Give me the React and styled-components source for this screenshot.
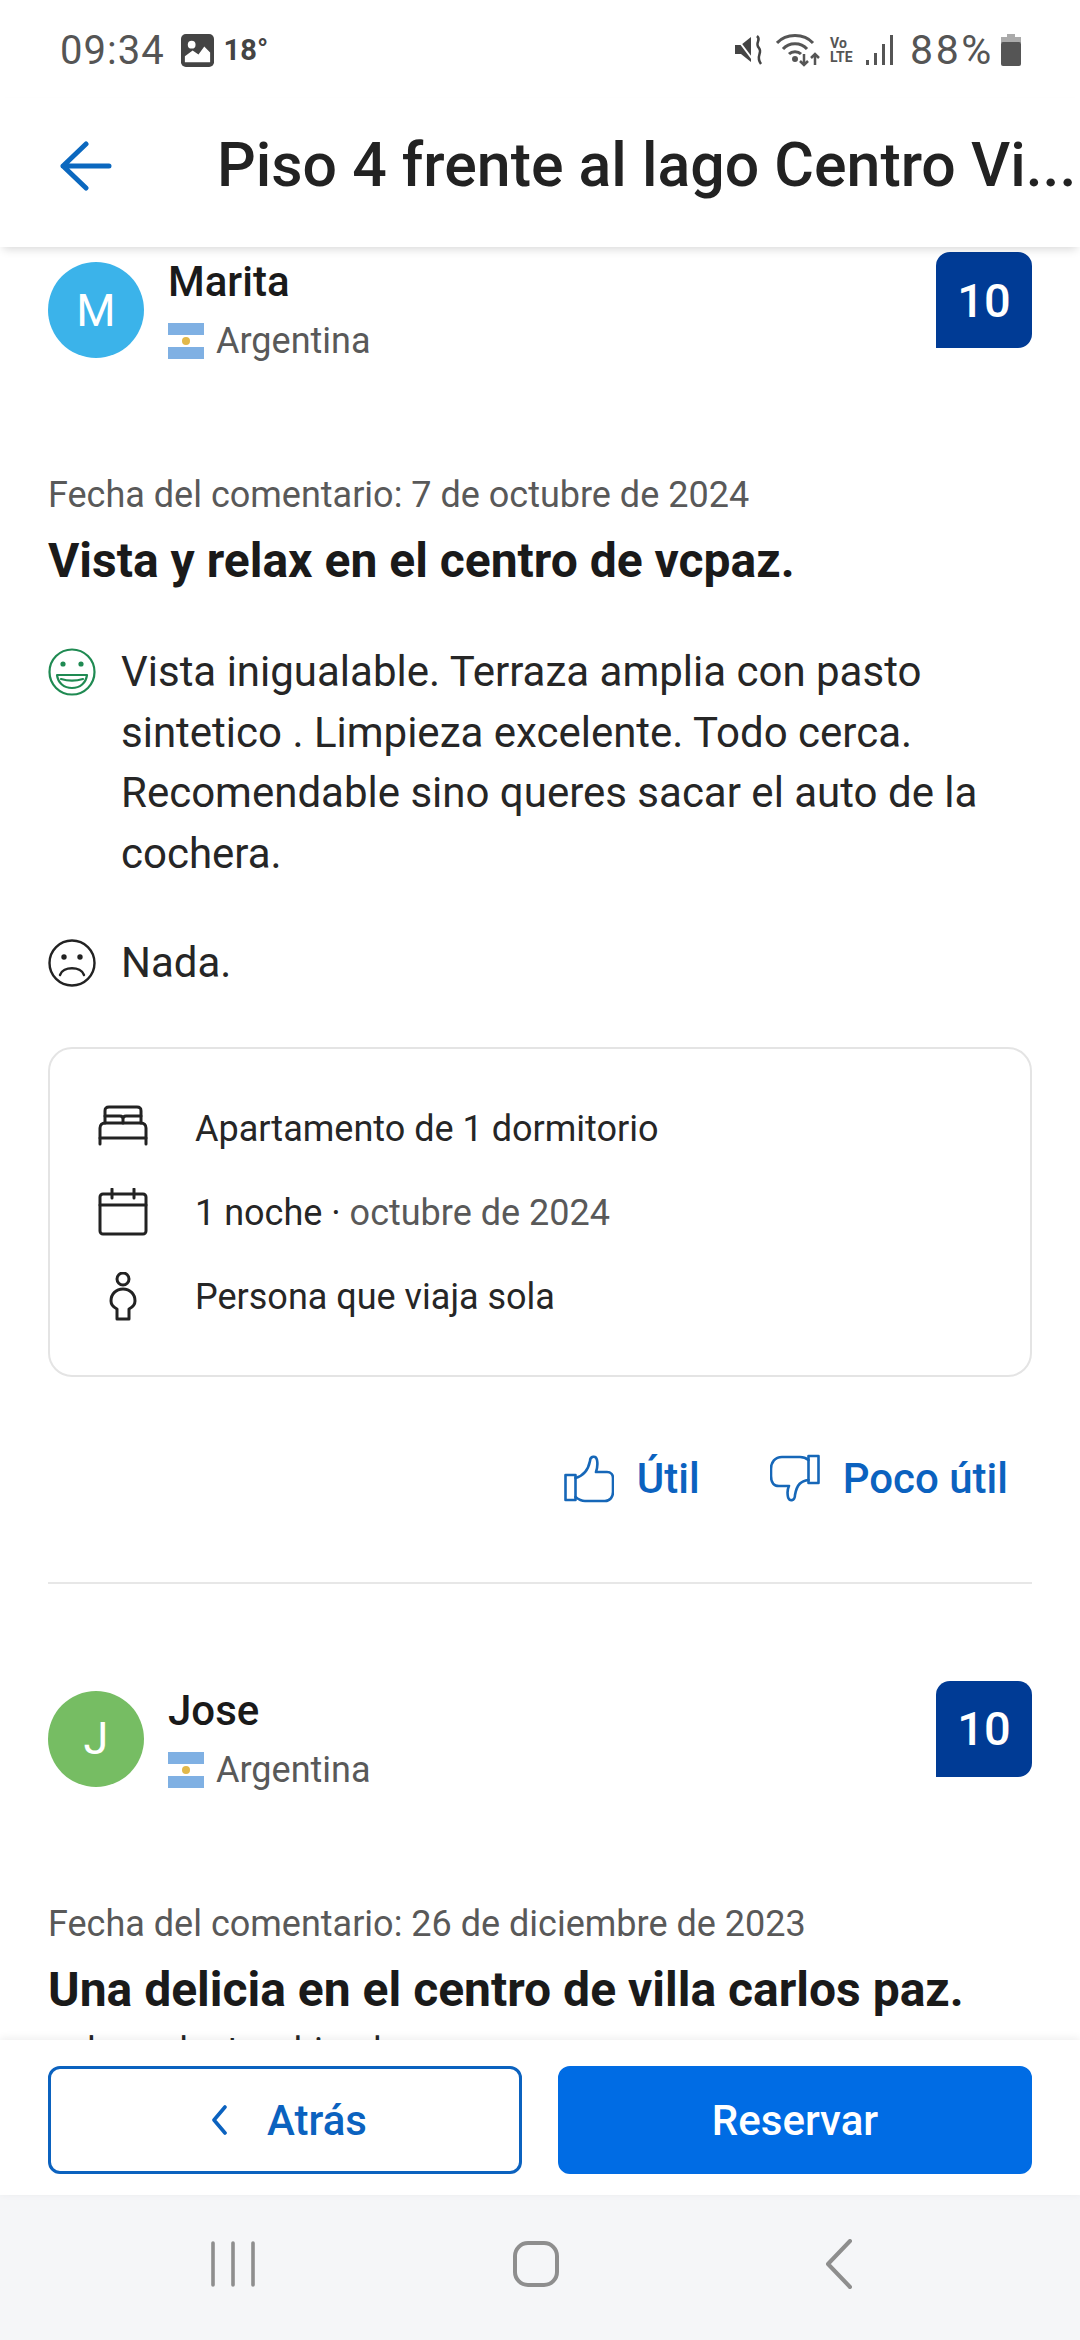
import React from "react";
import styled, { createGlobalStyle } from "styled-components";

const GlobalStyle = createGlobalStyle`
  html, body {
    margin: 0;
    padding: 0;
    background: #fff;
  }
  body {
    font-family: Roboto, "Liberation Sans", sans-serif;
    color: #1a1a1a;
  }
`;

const Screen = styled.div`
  width: 1080px;
  height: 2340px;
  display: flex;
  flex-direction: column;
  overflow: hidden;
  background: #fff;
`;

const StatusBar = styled.div`
  height: 98px;
  padding: 2px 58px 0 60px;
  box-sizing: border-box;
  display: flex;
  align-items: center;
  justify-content: space-between;
  color: #555;
  flex-shrink: 0;
`;

const StatusSide = styled.div`
  display: flex;
  align-items: center;
  gap: ${(p) => p.$gap || 10}px;
`;

const Clock = styled.span`
  font-size: 40px;
  letter-spacing: 1px;
  margin-right: 6px;
`;

const Temp = styled.span`
  font-size: 29px;
  font-weight: 700;
  color: #444;
`;

const Battery = styled.span`
  font-size: 41px;
  letter-spacing: 2.6px;
  margin-left: 6px;
`;

const Header = styled.header`
  height: 149px;
  flex-shrink: 0;
  display: flex;
  align-items: center;
  background: #fff;
  box-shadow: 0 5px 9px -3px rgba(0, 0, 0, 0.16);
  position: relative;
  z-index: 2;
  padding-bottom: 14px;
  box-sizing: border-box;
`;

const BackButton = styled.div`
  width: 217px;
  padding-left: 60px;
  box-sizing: border-box;
  display: flex;
  align-items: center;
  flex-shrink: 0;
`;

const Title = styled.h1`
  margin: 0;
  font-size: 60.8px;
  font-weight: 500;
  color: #222;
  white-space: nowrap;
`;

const Content = styled.main`
  flex: 1;
  min-height: 0;
  overflow: hidden;
  padding: 5px 48px 0;
`;

const Review = styled.article`
  padding-bottom: ${(p) => (p.$last ? 0 : 71)}px;
  border-bottom: ${(p) => (p.$last ? "none" : "2px solid #e7e7e7")};
  margin-bottom: 97px;
`;

const ReviewerRow = styled.div`
  display: flex;
  justify-content: space-between;
  align-items: flex-start;
  height: 164px;
`;

const Reviewer = styled.div`
  display: flex;
  gap: 24px;
  padding-top: 10px;
`;

const Avatar = styled.div`
  width: 96px;
  height: 96px;
  border-radius: 50%;
  background: ${(p) => p.$color};
  color: #fff;
  font-size: 45px;
  display: flex;
  align-items: center;
  justify-content: center;
`;

const ReviewerInfo = styled.div`
  display: flex;
  flex-direction: column;
  margin-top: -5px;
`;

const Name = styled.div`
  font-size: 42px;
  font-weight: 500;
  line-height: 50px;
  color: #1a1a1a;
`;

const Country = styled.div`
  display: flex;
  align-items: center;
  gap: 12px;
  font-size: 36px;
  line-height: 50px;
  margin-top: 9px;
  color: #595959;
`;

const Flag = styled.span`
  width: 36px;
  height: 36px;
  display: flex;
  align-items: center;
  justify-content: center;
  background: linear-gradient(#7fb0e3 0 33%, #fff 33% 67%, #7fb0e3 67%);
`;

const Sun = styled.span`
  width: 8px;
  height: 8px;
  border-radius: 50%;
  background: #e2b84a;
`;

const Score = styled.div`
  width: 96px;
  height: 96px;
  background: #003b95;
  color: #fff;
  font-size: 47px;
  font-weight: 500;
  border-radius: 14px 14px 14px 0;
  display: flex;
  align-items: center;
  justify-content: center;
`;

const DateLine = styled.div`
  font-size: 36px;
  line-height: 44px;
  margin-top: 57px;
  color: #595959;
`;

const ReviewTitle = styled.h2`
  margin: 16px 0 0;
  font-size: 48px;
  line-height: 56px;
  font-weight: 700;
  color: #1a1a1a;
`;

const Comment = styled.div`
  display: flex;
  gap: 24px;
  margin-top: ${(p) => p.$top}px;
  font-size: 42px;
  line-height: 60.6px;
  color: #262626;
`;

const CommentIcon = styled.div`
  width: 49px;
  height: 60px;
  flex-shrink: 0;
  display: flex;
  align-items: center;
`;

const CutOffLine = styled.div`
  margin-top: 11px;
  font-size: 36px;
  line-height: 44px;
  color: #262626;
`;

const StayCard = styled.div`
  margin-top: 53px;
  height: 330px;
  box-sizing: border-box;
  border: 2px solid #e4e4e4;
  border-radius: 24px;
  padding: 2px 48px 0;
  display: flex;
  flex-direction: column;
  justify-content: center;
  gap: 24px;
`;

const StayRow = styled.div`
  height: 60px;
  display: flex;
  align-items: center;
  gap: 47px;
  font-size: 36px;
  color: #262626;
`;

const StayIcon = styled.div`
  width: 50px;
  height: 50px;
  flex-shrink: 0;
`;

const Muted = styled.span`
  color: #595959;
`;

const Votes = styled.div`
  display: flex;
  justify-content: flex-end;
  gap: 70px;
  margin-top: 70px;
  padding-right: 24px;
`;

const Vote = styled.div`
  display: flex;
  align-items: center;
  gap: 23px;
  height: 64px;
  font-size: 42px;
  font-weight: 500;
  color: #0b62bf;
`;

const BottomBar = styled.div`
  flex-shrink: 0;
  height: 155px;
  box-sizing: border-box;
  padding: 26px 48px 0;
  background: #fff;
  box-shadow: 0 -2px 8px rgba(0, 0, 0, 0.07);
  display: flex;
  gap: 36px;
  position: relative;
  z-index: 2;
`;

const ActionButton = styled.div`
  width: 474px;
  height: 108px;
  box-sizing: border-box;
  padding-left: ${(p) => (p.$primary ? 0 : 8)}px;
  border-radius: 12px;
  border: 3px solid;
  background: ${(p) => (p.$primary ? "#006ce4" : "#fff")};
  border-color: ${(p) => (p.$primary ? "#006ce4" : "#0b62bf")};
  color: ${(p) => (p.$primary ? "#fff" : "#0b62bf")};
  font-size: 42px;
  font-weight: 500;
  display: flex;
  align-items: center;
  justify-content: center;
  gap: 40px;
`;

const NavBar = styled.nav`
  flex-shrink: 0;
  height: 145px;
  background: #f5f6f8;
  display: flex;
  align-items: center;
  justify-content: center;
  padding: 0 8px 8px 0;
  box-sizing: border-box;
`;

const NavSlot = styled.div`
  width: 303px;
  display: flex;
  justify-content: center;
`;

const Svg = ({ size = 50, w, h, stroke = "#222", sw = 3, children, box }) => (
  <svg
    width={w || size}
    height={h || size}
    viewBox={box || "0 0 50 50"}
    fill="none"
    stroke={stroke}
    strokeWidth={sw}
    strokeLinecap="round"
    strokeLinejoin="round"
    style={{ display: "block" }}
  >
    {children}
  </svg>
);

const BackArrow = () => (
  <Svg w={52} h={50} box="0 0 52 50" stroke="#0b68bf" sw={5}>
    <path d="M3 25H49M26 3L3 25L26 47" />
  </Svg>
);

const PictureIcon = () => (
  <svg width="33" height="33" viewBox="0 0 34 34">
    <rect width="34" height="34" rx="5" fill="#444" />
    <circle cx="11" cy="11" r="4" fill="#fff" />
    <path d="M4 29V23L12 17L18 21L24 13L30 19V29Z" fill="#fff" />
  </svg>
);

const MuteIcon = () => (
  <svg width="32" height="32" viewBox="0 0 32 32">
    <path d="M1 11H7L17 3V28L7 20H1Z" fill="#444" />
    <path d="M1 2L22 30" stroke="#fff" strokeWidth="2" />
    <path
      d="M23 2C28 6 20 9 25 14C29 19 21 22 27 30"
      fill="none"
      stroke="#444"
      strokeWidth="2.5"
    />
  </svg>
);

const WifiIcon = () => (
  <svg width="44" height="34" viewBox="0 0 44 34" fill="none" stroke="#555" strokeWidth="3">
    <path d="M1 10C10 0 28 0 37 10" />
    <path d="M7 16C13 9 25 9 31 16" />
    <path d="M13 21C16 18 22 18 25 21" />
    <circle cx="19" cy="26" r="1.5" fill="#555" />
    <path d="M28 21V32M24 28L28 32L32 28" strokeWidth="2.5" />
    <path d="M39 32V21M35 25L39 21L43 25" strokeWidth="2.5" />
  </svg>
);

const VoLte = styled.span`
  font-size: 14px;
  font-weight: 700;
  line-height: 14px;
  color: #555;
  width: 26px;
`;

const SignalIcon = () => (
  <svg width="28" height="32" viewBox="0 0 28 32" fill="#555">
    <rect x="0" y="26" width="3" height="5" />
    <rect x="8" y="19" width="3" height="12" />
    <rect x="16" y="10" width="3" height="21" />
    <rect x="24" y="1" width="3" height="30" />
  </svg>
);

const BatteryIcon = () => (
  <svg width="22" height="32" viewBox="0 0 22 32" style={{ marginLeft: -4 }}>
    <rect x="7" y="0" width="8" height="4" fill="#aaa" />
    <rect x="1" y="3" width="20" height="6" fill="#aaa" />
    <rect x="1" y="8" width="20" height="24" rx="2" fill="#555" />
  </svg>
);

const HappyFace = () => (
  <Svg size={48} box="0 0 48 48" stroke="#1f8a52" sw={2.2}>
    <circle cx="24" cy="24" r="22.5" />
    <circle cx="15" cy="16" r="1.5" fill="#1f8a52" />
    <circle cx="33" cy="16" r="1.5" fill="#1f8a52" />
    <path d="M9 27H39C38 35 32 40 24 40C16 40 10 35 9 27Z" />
    <path d="M13 31C20 33 28 33 35 31" />
  </Svg>
);

const SadFace = () => (
  <Svg size={48} box="0 0 48 48" sw={2.4}>
    <circle cx="24" cy="24" r="22.5" />
    <circle cx="16" cy="18" r="1.5" fill="#222" />
    <circle cx="32" cy="18" r="1.5" fill="#222" />
    <path d="M12 36C15 27 33 27 36 36" />
  </Svg>
);

const BedIcon = () => (
  <Svg>
    <path d="M2 40V24C2 21 4 19 7 19H43C46 19 48 21 48 24V40" />
    <path d="M2 34H48" />
    <path d="M7 19V7C7 4 8 3 11 3H39C42 3 43 4 43 7V19" />
    <path d="M7 12H22C24 12 25 13 25 15V19M43 12H28C26 12 25 13 25 15" />
  </Svg>
);

const CalendarIcon = () => (
  <Svg>
    <rect x="2" y="6" width="46" height="40" rx="3" />
    <path d="M2 17H48M14 1V10M36 1V10" />
  </Svg>
);

const PersonIcon = () => (
  <Svg>
    <circle cx="25" cy="7" r="6" />
    <path d="M19 47H31V37C35 35 37 33 37 29C37 22 32 17 25 17C18 17 13 22 13 29C13 33 15 35 19 37Z" />
  </Svg>
);

const ThumbUp = () => (
  <Svg w={50} h={50} stroke="#1667b8" sw={2.6}>
    <rect x="1.5" y="21" width="10" height="25" />
    <path d="M11.5 24C19 22 24 17 26 7C26 2 32 1 33 6C34 11 33 15 32 18H43C47 18 49 21 49 24V38C49 43 46 47 41 47H21C17 47 14 45 11.5 43" />
  </Svg>
);

const ThumbDown = () => (
  <Svg w={50} h={50} stroke="#1667b8" sw={2.6}>
    <rect x="38.5" y="2" width="10" height="27" />
    <path d="M38.5 26C31 27 27 30 25 41C25 47 19 48 18 43C17 38 18 34 19 32H9C4 32 1 29 1 22V15C1 8 5 3 12 3H30C34 3 36 4 38.5 6" />
  </Svg>
);

const ChevronLeft = () => (
  <Svg w={16} h={32} box="0 0 16 32" stroke="#0b62bf" sw={3.6}>
    <path d="M14 3L3 16L14 29" />
  </Svg>
);

const RecentsIcon = () => (
  <Svg w={46} h={46} box="0 0 46 46" stroke="#8e8e8e" sw={3.6}>
    <path d="M3 2V44M23 2V44M43 2V44" />
  </Svg>
);

const HomeIcon = () => (
  <Svg w={46} h={46} box="0 0 46 46" stroke="#8e8e8e" sw={4}>
    <rect x="2" y="2" width="42" height="42" rx="13" />
  </Svg>
);

const NavBack = () => (
  <Svg w={28} h={50} box="0 0 28 50" stroke="#8e8e8e" sw={4}>
    <path d="M25 2L3 25L25 48" />
  </Svg>
);

function ReviewHead({ initial, color, name }) {
  return (
    <ReviewerRow>
      <Reviewer>
        <Avatar $color={color}>{initial}</Avatar>
        <ReviewerInfo>
          <Name>{name}</Name>
          <Country>
            <Flag>
              <Sun />
            </Flag>
            Argentina
          </Country>
        </ReviewerInfo>
      </Reviewer>
      <Score>10</Score>
    </ReviewerRow>
  );
}

export default function App() {
  return (
    <Screen>
      <GlobalStyle />
      <StatusBar>
        <StatusSide>
          <Clock>09:34</Clock>
          <PictureIcon />
          <Temp>18°</Temp>
        </StatusSide>
        <StatusSide>
          <MuteIcon />
          <WifiIcon />
          <VoLte>
            Vo
            <br />
            LTE
          </VoLte>
          <SignalIcon />
          <Battery>88%</Battery>
          <BatteryIcon />
        </StatusSide>
      </StatusBar>
      <Header>
        <BackButton>
          <BackArrow />
        </BackButton>
        <Title>Piso 4 frente al lago Centro Vi...</Title>
      </Header>
      <Content>
        <Review>
          <ReviewHead initial="M" color="#3bb3ea" name="Marita" />
          <DateLine>Fecha del comentario: 7 de octubre de 2024</DateLine>
          <ReviewTitle>Vista y relax en el centro de vcpaz.</ReviewTitle>
          <Comment $top={53}>
            <CommentIcon>
              <HappyFace />
            </CommentIcon>
            <div>
              Vista inigualable. Terraza amplia con pasto
              <br />
              sintetico . Limpieza excelente. Todo cerca.
              <br />
              Recomendable sino queres sacar el auto de la
              <br />
              cochera.
            </div>
          </Comment>
          <Comment $top={49}>
            <CommentIcon>
              <SadFace />
            </CommentIcon>
            <div>Nada.</div>
          </Comment>
          <StayCard>
            <StayRow>
              <StayIcon>
                <BedIcon />
              </StayIcon>
              Apartamento de 1 dormitorio
            </StayRow>
            <StayRow>
              <StayIcon>
                <CalendarIcon />
              </StayIcon>
              <span>
                1 noche · <Muted>octubre de 2024</Muted>
              </span>
            </StayRow>
            <StayRow>
              <StayIcon>
                <PersonIcon />
              </StayIcon>
              Persona que viaja sola
            </StayRow>
          </StayCard>
          <Votes>
            <Vote>
              <ThumbUp />
              Útil
            </Vote>
            <Vote>
              <ThumbDown />
              Poco útil
            </Vote>
          </Votes>
        </Review>
        <Review $last>
          <ReviewHead initial="J" color="#76bd63" name="Jose" />
          <DateLine>Fecha del comentario: 26 de diciembre de 2023</DateLine>
          <ReviewTitle>Una delicia en el centro de villa carlos paz.</ReviewTitle>
          <CutOffLine>sol excelente, ubicada</CutOffLine>
        </Review>
      </Content>
      <BottomBar>
        <ActionButton>
          <ChevronLeft />
          Atrás
        </ActionButton>
        <ActionButton $primary>Reservar</ActionButton>
      </BottomBar>
      <NavBar>
        <NavSlot>
          <RecentsIcon />
        </NavSlot>
        <NavSlot>
          <HomeIcon />
        </NavSlot>
        <NavSlot>
          <NavBack />
        </NavSlot>
      </NavBar>
    </Screen>
  );
}
